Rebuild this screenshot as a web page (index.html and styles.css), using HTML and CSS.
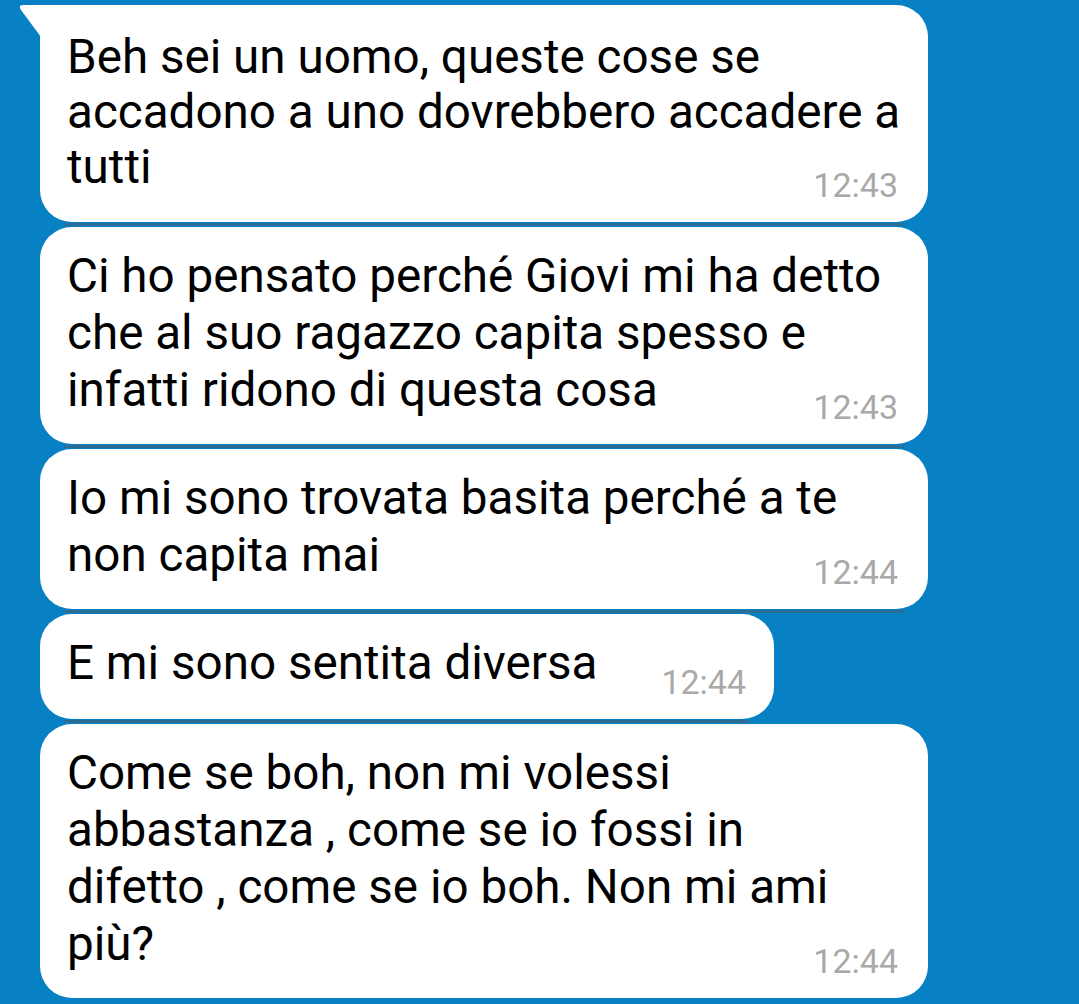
FILE: index.html
```html
<!DOCTYPE html>
<html lang="it">
<head>
<meta charset="utf-8">
<title>Chat</title>
<link rel="stylesheet" href="styles.css">
</head>
<body>
<div class="chat">
  <div class="bubble wide first">
    <svg class="tail" width="22" height="34" viewBox="0 0 22 34"><path d="M22 0 H4 Q-1 0 2 5 L22 32 Z" fill="#fff"/></svg>
    <div class="text">Beh sei un uomo, queste cose se<br>accadono a uno dovrebbero accadere a<br>tutti</div>
    <div class="time">12:43</div>
  </div>
  <div class="bubble wide">
    <div class="text">Ci ho pensato perché Giovi mi ha detto<br>che al suo ragazzo capita spesso e<br>infatti ridono di questa cosa</div>
    <div class="time">12:43</div>
  </div>
  <div class="bubble wide">
    <div class="text">Io mi sono trovata basita perché a te<br>non capita mai</div>
    <div class="time">12:44</div>
  </div>
  <div class="bubble short">
    <div class="text">E mi sono sentita diversa</div>
    <div class="time">12:44</div>
  </div>
  <div class="bubble wide last">
    <div class="text">Come se boh, non mi volessi<br>abbastanza , come se io fossi in<br>difetto , come se io boh. Non mi ami<br>più?</div>
    <div class="time">12:44</div>
  </div>
</div>
</body>
</html>
```

FILE: styles.css
```css
html, body {
  margin: 0;
  padding: 0;
  background: #0880c4;
}
body {
  width: 1079px;
  height: 1004px;
  overflow: hidden;
  font-family: Roboto, "Noto Sans", sans-serif;
}
.chat {
  display: flex;
  flex-direction: column;
  align-items: flex-start;
  gap: 5px;
  padding: 5px 0 0 40px;
}
.bubble {
  position: relative;
  background: #fff;
  border-radius: 32px;
  padding: 21px 30px 19px 27px;
  box-sizing: border-box;
}
.bubble::after {
  content: "";
  position: absolute;
  left: 24px;
  right: 24px;
  top: 100%;
  height: 5px;
  background: linear-gradient(to bottom, transparent 1px, #2a6d96 1px, #2a6d96 4px, transparent 4px);
}
.bubble.last::after {
  display: none;
}
.bubble.first {
  border-top-left-radius: 0;
  padding-top: 25px;
}
.bubble.first .text {
  line-height: 55px;
}
.bubble.first .time {
  margin-top: -28px;
}
.tail {
  position: absolute;
  left: -21px;
  top: 0;
}
.wide {
  width: 888px;
}
.text {
  font-size: 47.6px;
  line-height: 57px;
  color: #000;
  white-space: nowrap;
}
.time {
  font-size: 34px;
  line-height: 36px;
  color: #a9a9a9;
  text-align: right;
  margin-top: -30px;
}
.short {
  display: flex;
  align-items: flex-start;
  padding-right: 28px;
}
.short .time {
  margin-top: 29px;
  margin-left: 64px;
}
```
